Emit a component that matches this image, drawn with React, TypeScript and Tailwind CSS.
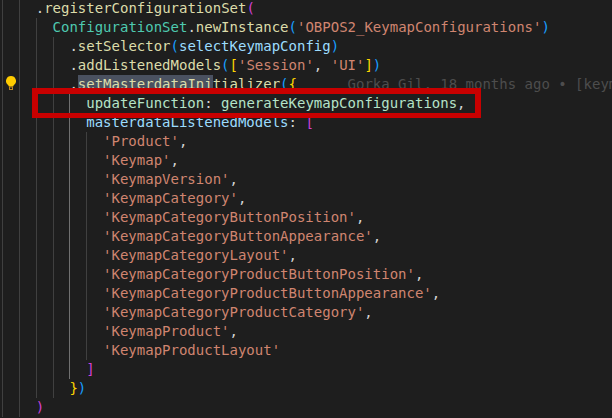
type Seg = [string, string];

const white = "text-[#d4d4d4]";
const green = "text-[#4ec9b0]";
const yellow = "text-[#dcdcaa]";
const cyan = "text-[#9cdcfe]";
const str = "text-[#d08570]";
const pink = "text-[#d040d8]";
const gold = "text-[#ffd700]";
const blue = "text-[#179fff]";
const mint = "text-[#b5e3c8]";

const lines: { indent: number; active?: boolean; segs: Seg[] }[] = [
  { indent: 2, segs: [[white, "."], [yellow, "registerConfigurationSet"], [pink, "("]] },
  { indent: 3, segs: [[green, "ConfigurationSet"], [white, "."], [yellow, "newInstance"], [blue, "("], [str, "'OBPOS2_KeymapConfigurations'"], [blue, ")"]] },
  { indent: 4, segs: [[white, "."], [yellow, "setSelector"], [blue, "("], [cyan, "selectKeymapConfig"], [blue, ")"]] },
  { indent: 4, segs: [[white, "."], [yellow, "addListenedModels"], [blue, "("], [gold, "["], [str, "'Session'"], [white, ", "], [str, "'UI'"], [gold, "]"], [blue, ")"]] },
  { indent: 4, segs: [[white, "."], [yellow, "setMasterdataInitializer"], [blue, "("], [gold, "{"]] },
  { indent: 5, active: true, segs: [[mint, "updateFunction"], [white, ": "], [mint, "generateKeymapConfigurations"], [white, ","]] },
  { indent: 5, active: true, segs: [[cyan, "masterdataListenedModels"], [white, ": "], [pink, "["]] },
  ...[
    "'Product',",
    "'Keymap',",
    "'KeymapVersion',",
    "'KeymapCategory',",
    "'KeymapCategoryButtonPosition',",
    "'KeymapCategoryButtonAppearance',",
    "'KeymapCategoryLayout',",
    "'KeymapCategoryProductButtonPosition',",
    "'KeymapCategoryProductButtonAppearance',",
    "'KeymapCategoryProductCategory',",
    "'KeymapProduct',",
    "'KeymapProductLayout'",
  ].map((s) => ({
    indent: 6,
    active: true,
    segs: (s.endsWith(",") ? [[str, s.slice(0, -1)], [white, ","]] : [[str, s]]) as Seg[],
  })),
  { indent: 5, active: true, segs: [[pink, "]"]] },
  { indent: 4, segs: [[gold, "}"], [blue, ")"]] },
  { indent: 2, segs: [[pink, ")"]] },
];

export default function App() {
  return (
    <div className="relative h-[418px] w-[612px] overflow-hidden bg-[#1e1e1e] font-['DejaVu_Sans_Mono',monospace] text-[14px] leading-[19px]">
      <div className="-mt-[1px] pl-[2px]">
        {lines.map((line, i) => (
          <div key={i} className="flex h-[19px] whitespace-pre">
            {Array.from({ length: line.indent }).map((_, g) => (
              <span
                key={g}
                className={`w-[2ch] shrink-0 border-l ${line.active && g === 4 ? "border-[#707070]" : "border-[#404040]"}`}
              />
            ))}
            <span className="relative">
              {i === 4 && <span className="absolute top-0 left-[1ch] h-[19px] w-[16ch] bg-[#4a5160]" />}
              {line.segs.map(([c, t], k) => (
                <span key={k} className={`relative ${c}`}>
                  {t}
                </span>
              ))}
              {i === 4 && <span className="relative ml-[6ch] text-[#4d4d4d]">Gorka Gil, 18 months ago • [keym</span>}
            </span>
          </div>
        ))}
      </div>

      <svg className="absolute top-[76px] left-[6px]" width="10" height="14" viewBox="0 0 10 14">
        <path d="M5 0a5 5 0 0 0-3 9c.5.5.8 1 .8 1.6h4.4c0-.6.3-1.1.8-1.6a5 5 0 0 0-3-9z" fill="#ffcc00" />
        <rect x="3.5" y="11" width="3" height="2.5" fill="none" stroke="#c08a20" />
      </svg>

      <div className="absolute top-[88px] left-[32px] h-[30px] w-[449px] border-[6px] border-b-[5px] border-[#c80000]" />
    </div>
  );
}
